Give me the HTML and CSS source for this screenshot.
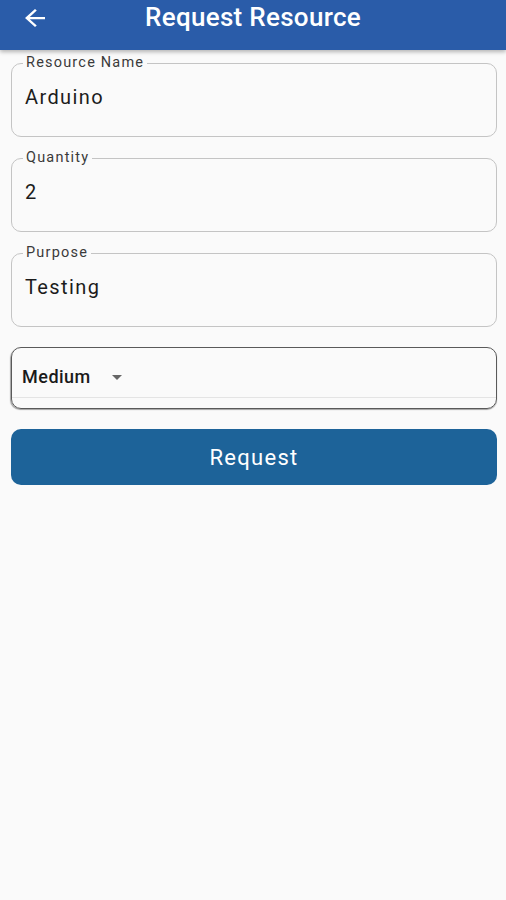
FILE: index.html
```html
<!DOCTYPE html>
<html lang="en">
<head>
<meta charset="utf-8">
<title>Request Resource</title>
<link rel="stylesheet" href="styles.css">
</head>
<body>
<header class="appbar">
  <button class="back" aria-label="Back">
    <svg width="20" height="18" viewBox="4 4 16 16" preserveAspectRatio="none"><path d="M20 11H7.83l5.59-5.59L12 4l-8 8 8 8 1.41-1.41L7.83 13H20v-2z" fill="#fff"/></svg>
  </button>
  <h1 class="title">Request Resource</h1>
</header>
<main class="form">
  <fieldset class="field">
    <legend class="field-label">Resource Name</legend>
    <div class="field-value">Arduino</div>
  </fieldset>
  <fieldset class="field">
    <legend class="field-label">Quantity</legend>
    <div class="field-value">2</div>
  </fieldset>
  <fieldset class="field">
    <legend class="field-label">Purpose</legend>
    <div class="field-value">Testing</div>
  </fieldset>
  <div class="dropdown-box">
    <div class="dropdown">
      <span class="dropdown-value">Medium</span>
      <span class="dropdown-arrow"></span>
    </div>
  </div>
  <button class="submit">Request</button>
</main>
</body>
</html>
```

FILE: styles.css
```css
* { box-sizing: border-box; }
html, body {
  margin: 0;
  padding: 0;
  background: #fafafa;
  font-family: Roboto, "Noto Sans", sans-serif;
}
.appbar {
  height: 50px;
  background: #2a5ca9;
  display: flex;
  align-items: center;
  position: relative;
  box-shadow: 0 2px 4px rgba(0,0,0,0.28);
}
.back {
  border: 0;
  background: none;
  padding: 0;
  margin: 0 0 14px 25px;
  width: 20px;
  height: 18px;
  display: flex;
}
.title {
  margin: 0 0 16px;
  flex: 1;
  text-align: center;
  color: #fff;
  font-size: 26px;
  font-weight: 500;
  padding-right: 45px;
  letter-spacing: 0.3px;
}
.form {
  padding: 5px 9px 0 11px;
  display: flex;
  flex-direction: column;
  gap: 13px;
}
.field {
  margin: 0;
  border: 1px solid #c4c4c4;
  border-radius: 10px;
  padding: 0 13px 27px;
  min-width: 0;
}
.field-label {
  margin-left: -2px;
  padding: 0 3px;
  font-size: 14.5px;
  line-height: 16px;
  color: #3a3a3a;
  letter-spacing: 1.2px;
}
.field-value {
  margin-top: 14px;
  font-size: 20px;
  line-height: 24px;
  color: #1c1c1c;
  letter-spacing: 1.4px;
}
.dropdown-box {
  margin-top: 7px;
  height: 62px;
  border: 1px solid #5a5a5a;
  border-radius: 10px;
  box-shadow: -0.5px 1px 1px rgba(0,0,0,0.35);
  padding: 0 0 9px;
}
.dropdown {
  height: 50px;
  padding-top: 6px;
  border-bottom: 1px solid #e4e4e4;
  display: flex;
  align-items: center;
  padding-left: 10px;
  gap: 21px;
}
.dropdown-value {
  font-size: 18px;
  font-weight: 500;
  color: #1a1a1a;
  letter-spacing: 0.5px;
  margin-top: 2px;
}
.dropdown-arrow {
  width: 0;
  height: 0;
  border-left: 5px solid transparent;
  border-right: 5px solid transparent;
  border-top: 5px solid #666;
  margin-top: 3px;
}
.submit {
  margin-top: 7px;
  height: 56px;
  border: 0;
  border-radius: 10px;
  background: #1d6399;
  color: #fff;
  font-family: Roboto, "Noto Sans", sans-serif;
  font-size: 22px;
  font-weight: 400;
  letter-spacing: 1.3px;
}
```
